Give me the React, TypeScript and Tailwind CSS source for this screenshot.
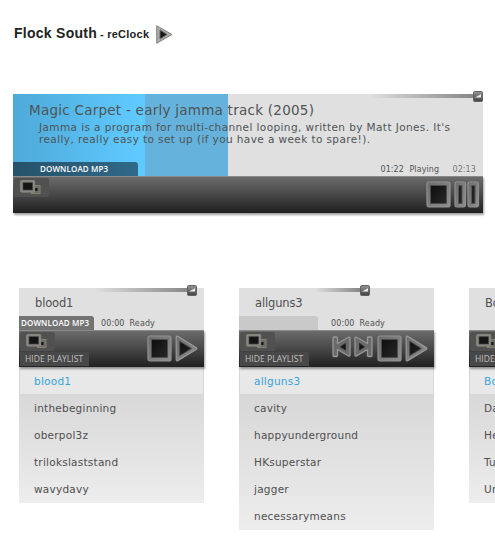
import React from 'react';

const verdana = "font-['DejaVu_Sans',Verdana,sans-serif]";
const label = "font-['Open_Sans',sans-serif]";

function Metal() {
  return (
    <svg className="absolute" width="0" height="0" aria-hidden="true">
      <defs>
        <linearGradient id="metal" x1="0" y1="0" x2="1" y2="1">
          <stop offset="0" stopColor="#6b6b6b" />
          <stop offset="1" stopColor="#8f8f8f" />
        </linearGradient>
        <linearGradient id="hole" x1="0" y1="0" x2="1" y2="1">
          <stop offset="0" stopColor="#0e0e0e" />
          <stop offset="1" stopColor="#272727" />
        </linearGradient>
        <linearGradient id="knob" x1="0" y1="0" x2="0" y2="1">
          <stop offset="0" stopColor="#969696" />
          <stop offset="1" stopColor="#414141" />
        </linearGradient>
      </defs>
    </svg>
  );
}

function StopIcon() {
  return (
    <svg width="25" height="27" viewBox="0 0 25 27" className="block shrink-0">
      <rect x="1" y="1" width="23" height="25" rx="2" fill="url(#metal)" stroke="#929292" strokeWidth="1.2" />
      <rect x="4.5" y="4.5" width="16" height="18" rx=".5" fill="url(#hole)" stroke="#4c4c4c" />
    </svg>
  );
}

function PlayIcon() {
  return (
    <svg width="24" height="27" viewBox="0 0 24 27" className="block shrink-0">
      <path d="M1.2 2.2Q1.2 .8 2.7 1.4L21.2 12.6Q22.5 13.5 21.2 14.4L2.7 25.6Q1.2 26.2 1.2 24.8Z" fill="url(#metal)" stroke="#9a9a9a" strokeWidth="1.2" />
      <path d="M4.7 6.3L16.5 13.5L4.7 20.7Z" fill="url(#hole)" stroke="#4c4c4c" />
    </svg>
  );
}

function PauseIcon() {
  return (
    <svg width="26" height="27" viewBox="0 0 26 27" className="block shrink-0">
      <rect x="1" y="1" width="10.5" height="25" rx="1.8" fill="url(#metal)" stroke="#909090" strokeWidth="1.2" />
      <rect x="14" y="1" width="10.5" height="25" rx="1.8" fill="url(#metal)" stroke="#909090" strokeWidth="1.2" />
      <rect x="4.5" y="4.5" width="3.5" height="18" fill="#222" stroke="#555" />
      <rect x="17.5" y="4.5" width="3.5" height="18" fill="#222" stroke="#555" />
    </svg>
  );
}

function SkipIcon({ flip = false }: { flip?: boolean }) {
  return (
    <svg width="19" height="22" viewBox="0 0 19 22" className={`block shrink-0 ${flip ? '-scale-x-100' : ''}`}>
      <path d="M1 2Q1 1 2 1H4.5Q5.5 1 5.5 2V7.5L16.5 1.3Q18 .8 18 2.2V19Q18 20.4 16.5 19.8L5.5 13.5V19.5Q5.5 20.5 4.5 20.5H2Q1 20.5 1 19.5Z" fill="#6a6a6a" stroke="#979797" strokeWidth="1.3" />
      <path d="M8.5 10.8L13.5 7.5V14Z" fill="#151515" stroke="#2a2a2a" />
    </svg>
  );
}

function ScreensButton() {
  return (
    <div className="h-[19px] w-[35px] rounded-[2px] bg-[#515151] pl-[6px] pt-[2px]">
      <svg width="22" height="15" viewBox="0 0 22 15" className="block">
        <rect x="11.5" y="5.5" width="8.5" height="8" fill="#6c6c69" stroke="#85816f" />
        <rect x="14.5" y="8" width="3" height="3" fill="#161616" />
        <rect x=".7" y=".6" width="14" height="11.5" rx=".7" fill="#858585" stroke="#8d8979" />
        <rect x="3" y="2.7" width="9.5" height="7.3" fill="#141414" stroke="#454545" strokeWidth=".7" />
      </svg>
    </div>
  );
}

function Volume({ ramp }: { ramp: string }) {
  return (
    <div className="flex h-[4px] items-start">
      <div className={`h-[4px] bg-linear-to-r from-[#e0e0e0] to-[#888] ${ramp}`} />
      <svg width="10" height="11" viewBox="0 0 10 11" className="-mt-[3px] block shrink-0">
        <rect x=".5" y=".5" width="9" height="10" rx="1.2" fill="url(#knob)" stroke="#626262" />
        <path d="M2 6.5L8 3.3V6.5Z" fill="#eee" />
      </svg>
    </div>
  );
}

const barStyle =
  'border-t border-[#8a8a8a] bg-linear-to-b from-[#6b6b6b] from-0% via-[#4b4b4b] via-45% to-[#202020] shadow-[1px_2px_2px_rgba(0,0,0,0.38)]';

type CardProps = {
  title: string;
  items: string[];
  width: string;
  ramp?: string;
  skip?: boolean;
  download?: boolean;
};

function Card({ title, items, width, ramp, skip, download }: CardProps) {
  return (
    <section className={`shrink-0 text-[#4f4f4f] ${width} ${verdana}`}>
      <div className="flex h-[42px] flex-col bg-[#e0e0e0]">
        <div className="h-[4px] pl-[76px]">{ramp && <Volume ramp={ramp} />}</div>
        <h2 className="h-[24px] pl-[16px] pt-[3px] text-[11.5px] leading-[16px] tracking-[-0.15px]">{title}</h2>
        {(download || skip) && (
          <div className="flex h-[14px]">
            <div className={`flex h-[14px] items-center overflow-hidden whitespace-nowrap rounded-tr-[3px] pl-[2px] text-[8px] font-semibold text-white ${label} ${download ? 'w-[75px] bg-[#737373]' : 'w-[79px] bg-[#c9c9c9]'}`}>
              {download && <span className="tracking-[0.13px]">DOWNLOAD MP3</span>}
            </div>
            <div className={`flex gap-[5px] whitespace-nowrap text-[8px] leading-[16px] tracking-[0.1px] ${download ? 'pl-[7px]' : 'pl-[13px]'}`}>
              <span>00:00</span><span>Ready</span>
            </div>
          </div>
        )}
      </div>
      <div className={`relative flex h-[37px] justify-between pl-[1px] pr-[5px] ${barStyle}`}>
        <div className="pt-[1px]">
          <ScreensButton />
          <div className={`mt-[1px] h-[14px] w-[69px] whitespace-nowrap bg-[#484848] pl-[5px] text-[8.5px] leading-[14px] tracking-[0.05px] text-[#c1c1c1] ${label}`}>HIDE PLAYLIST</div>
        </div>
        <div className="flex items-start pt-[4px]">
          {skip && <div className="mr-[4px] flex gap-[3px] pt-[1px]"><SkipIcon /><SkipIcon flip /></div>}
          <StopIcon />
          <div className="ml-[3px]"><PlayIcon /></div>
        </div>
      </div>
      <ul className="bg-linear-to-b from-[#d3d3d3] to-[#ededed] text-[10.5px] leading-[27px] tracking-[0.24px]">
        {items.map((item, i) => (
          <li key={item} className={i === 0 ? 'mb-[1px] h-[27px] border-x border-[#d5d5d5] bg-[#e8e8e8] pl-[14px] pt-[1px] text-[#35a5dc]' : 'h-[27px] pl-[15px]'}>{item}</li>
        ))}
      </ul>
    </section>
  );
}

export default function App() {
  return (
    <main className="h-[544px] w-[495px] overflow-hidden bg-white">
      <Metal />
      <header className="flex h-[94px] items-start pl-[14px] pt-[24px] font-['Liberation_Sans',Arial,sans-serif] font-bold text-[#222]">
        <h1 className="flex items-baseline whitespace-nowrap leading-[18px]">
          <span className="w-[86px] text-[14px] tracking-[0.27px]">Flock South</span>
          <span className="w-[56px] text-[11px] tracking-[0.25px]">- reClock</span>
        </h1>
        <svg width="18" height="20" viewBox="0 0 18 20" className="mt-[1px] block">
          <path d="M.7 .7L16 9.5L.7 18.3Z" fill="#aaa" stroke="#858579" />
          <path d="M4 5L11 9.5L4 14Z" fill="#171717" stroke="#666" />
        </svg>
      </header>

      <section className={`ml-[13px] w-[470px] text-[#4f5456] ${verdana}`}>
        <div className="flex h-[82px] flex-col bg-[linear-gradient(90deg,#4ea9d8_0px,#5fcaff_125px,#5fcaff_132px,#65b2dc_132px,#65b2dc_215px,#e0e0e0_215px)]">
          <div className="pl-[357px]"><Volume ramp="w-[104px]" /></div>
          <h2 className="h-[23px] whitespace-nowrap pl-[16px] pt-[3px] text-[13.5px] leading-[18px] tracking-[0.25px]">Magic Carpet - early jamma track (2005)</h2>
          <p className="h-[41px] whitespace-nowrap pl-[26px] text-[10.5px] leading-[12px] tracking-[0.4px]">
            Jamma is a program for multi-channel looping, written by Matt Jones. It's<br />
            really, really easy to set up (if you have a week to spare!).
          </p>
          <div className="flex h-[14px] justify-between">
            <div className={`h-[14px] w-[125px] whitespace-nowrap rounded-tr-[3px] bg-linear-to-r from-[#25526b] to-[#306989] pl-[27px] text-[8px] font-semibold leading-[14px] tracking-[0.13px] text-white ${label}`}>DOWNLOAD MP3</div>
            <div className="flex whitespace-nowrap pr-[7px] text-[8px] leading-[16px] tracking-[0.1px]">
              <span className="w-[29px]">01:22</span><span className="w-[43px]">Playing</span><span className="text-[#777]">02:13</span>
            </div>
          </div>
        </div>
        <div className={`flex h-[37px] justify-between pl-[1px] pr-[3px] ${barStyle}`}>
          <div className="pt-[1px]"><ScreensButton /></div>
          <div className="flex gap-[3px] pt-[4px]"><StopIcon /><PauseIcon /></div>
        </div>
      </section>

      <div className="ml-[19px] mt-[75px] flex items-start">
        <Card title="blood1" items={['blood1', 'inthebeginning', 'oberpol3z', 'trilokslaststand', 'wavydavy']} width="w-[185px]" ramp="w-[92px]" download />
        <div className="ml-[35px]"><Card title="allguns3" items={['allguns3', 'cavity', 'happyunderground', 'HKsuperstar', 'jagger', 'necessarymeans']} width="w-[195px]" ramp="w-[45px]" skip /></div>
        <div className="ml-[35px]"><Card title="Bo" items={['Bo', 'Da', 'He', 'Tu', 'Un']} width="w-[185px]" /></div>
      </div>
    </main>
  );
}
